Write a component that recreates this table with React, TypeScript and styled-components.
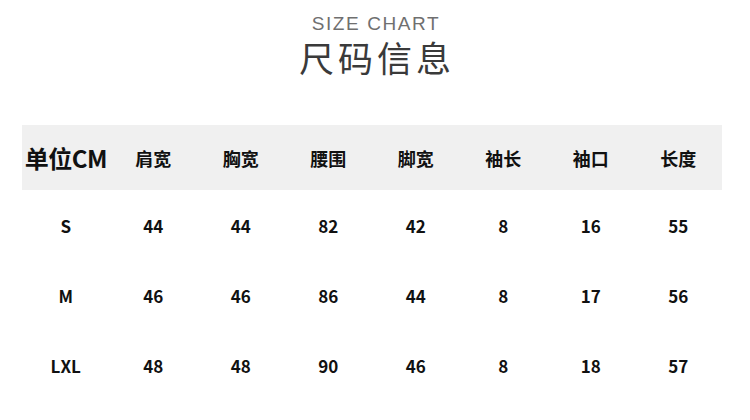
import styled, { createGlobalStyle } from "styled-components";

const GlobalStyle = createGlobalStyle`
  html, body {
    margin: 0;
    padding: 0;
    background: #ffffff;
  }
  body {
    width: 750px;
    height: 420px;
    overflow: hidden;
    font-family: "Noto Sans CJK SC", "Noto Sans", sans-serif;
  }
`;

const Pagina = styled.div`
  width: 750px;
  height: 420px;
  display: flex;
  flex-direction: column;
  align-items: center;
`;

const Cabecalho = styled.div`
  display: flex;
  flex-direction: column;
  align-items: center;
  padding-top: 14px;
`;

const Subtitulo = styled.div`
  font-family: "Liberation Sans", Arial, sans-serif;
  font-size: 19px;
  line-height: 20px;
  letter-spacing: 1.6px;
  color: #6f6f6f;
  padding-left: 2px;
`;

const Titulo = styled.h1`
  margin: 2px 0 0;
  font-family: "Noto Sans CJK SC", sans-serif;
  font-weight: 400;
  font-size: 35px;
  line-height: 42px;
  letter-spacing: 4px;
  color: #3a3a3a;
  padding-left: 4px;
`;

const Tabela = styled.div`
  margin-top: 47px;
  width: 700px;
  align-self: flex-start;
  margin-left: 22px;
  display: flex;
  flex-direction: column;
`;

const Linha = styled.div<{ $cabecalho?: boolean }>`
  display: grid;
  grid-template-columns: repeat(8, 1fr);
  align-items: center;
  height: ${(p) => (p.$cabecalho ? "65px" : "70px")};
  background: ${(p) => (p.$cabecalho ? "#f0f0f0" : "transparent")};
`;

const Celula = styled.div<{ $destaque?: boolean; $titulo?: boolean }>`
  text-align: center;
  font-weight: 700;
  font-size: ${(p) => (p.$destaque ? "24px" : p.$titulo ? "18px" : "17px")};
  color: #111;
  white-space: nowrap;
  letter-spacing: ${(p) => (p.$destaque ? "-0.5px" : "0")};
`;

const colunas = ["肩宽", "胸宽", "腰围", "脚宽", "袖长", "袖口", "长度"];

const tamanhos = [
  { nome: "S", valores: [44, 44, 82, 42, 8, 16, 55] },
  { nome: "M", valores: [46, 46, 86, 44, 8, 17, 56] },
  { nome: "LXL", valores: [48, 48, 90, 46, 8, 18, 57] },
];

const App = () => {
  return (
    <>
      <GlobalStyle />
      <Pagina>
        <Cabecalho>
          <Subtitulo>SIZE CHART</Subtitulo>
          <Titulo>尺码信息</Titulo>
        </Cabecalho>
        <Tabela>
          <Linha $cabecalho>
            <Celula $destaque>单位CM</Celula>
            {colunas.map((c) => (
              <Celula key={c} $titulo>
                {c}
              </Celula>
            ))}
          </Linha>
          {tamanhos.map((t) => (
            <Linha key={t.nome}>
              <Celula>{t.nome}</Celula>
              {t.valores.map((v, i) => (
                <Celula key={i}>{v}</Celula>
              ))}
            </Linha>
          ))}
        </Tabela>
      </Pagina>
    </>
  );
};

export default App;
